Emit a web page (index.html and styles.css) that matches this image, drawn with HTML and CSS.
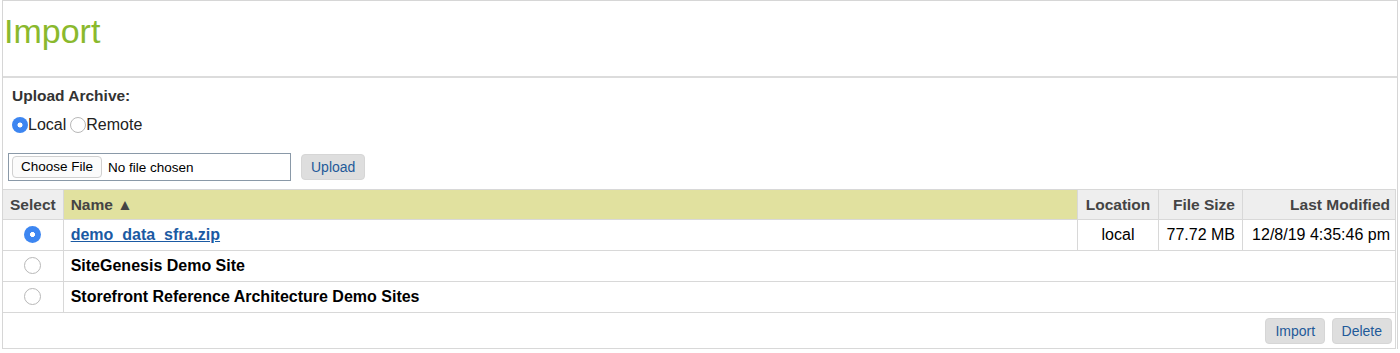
FILE: index.html
```html
<!DOCTYPE html>
<html>
  <head>
    <title>Import</title>
    <link rel="stylesheet" href="styles.css">
  </head>
  <body>
    <div class="page">
      <div class="head">
        <h1 class="title">Import</h1>
      </div>

      <div class="upload">
        <p class="upload-label">Upload Archive:</p>
        <div class="radios">
          <label class="opt"><input type="radio" name="where" class="radio" checked>Local</label>
          <label class="opt"><input type="radio" name="where" class="radio">Remote</label>
        </div>
        <div class="file-row">
          <div class="file-box">
            <span class="choose">Choose File</span>
            <span class="no-file">No file chosen</span>
          </div>
          <button class="btn">Upload</button>
        </div>
      </div>

      <table class="archives">
        <tr>
          <th class="col-select">Select</th>
          <th class="col-name sorted">Name &#9650;</th>
          <th class="col-loc">Location</th>
          <th class="col-size">File Size</th>
          <th class="col-date">Last Modified</th>
        </tr>
        <tr>
          <td class="col-select"><input type="radio" name="pick" class="radio" checked></td>
          <td class="col-name"><a href="#" class="file-link">demo_data_sfra.zip</a></td>
          <td class="col-loc">local</td>
          <td class="col-size">77.72 MB</td>
          <td class="col-date">12/8/19 4:35:46 pm</td>
        </tr>
        <tr>
          <td class="col-select"><input type="radio" name="pick" class="radio"></td>
          <td class="col-name" colspan="4">SiteGenesis Demo Site</td>
        </tr>
        <tr>
          <td class="col-select"><input type="radio" name="pick" class="radio"></td>
          <td class="col-name" colspan="4">Storefront Reference Architecture Demo Sites</td>
        </tr>
        <tr>
          <td class="actions" colspan="5">
            <button class="btn">Import</button>
            <button class="btn">Delete</button>
          </td>
        </tr>
      </table>
    </div>
  </body>
</html>
```

FILE: styles.css
```css
body{
  margin: 0;
  font-family: "Liberation Sans", Arial, Helvetica, sans-serif;
  color: #000;
  background-color: white;
}

.page{
  margin-left: 2px;
  width: 1396px;
  box-sizing: border-box;
  border: 1px solid #d6d6d6;
  border-bottom: none;
}

.head{
  height: 75px;
  border-bottom: 2px solid #dcdcdc;
}

.title{
  margin: 0;
  padding-top: 10px;
  padding-left: 1px;
  font-size: 34px;
  line-height: 40px;
  font-weight: normal;
  color: #8ab92d;
}

.upload{
  padding: 9px 0 8px 5px;
}

.upload-label{
  margin: 0 0 0 4px;
  font-size: 15.5px;
  line-height: 18px;
  font-weight: bold;
  color: #333;
}

.radios{
  display: flex;
  margin-top: 10px;
  height: 20px;
  align-items: center;
}

.opt{
  display: flex;
  align-items: center;
  font-size: 16px;
  color: #222;
}

.radio{
  appearance: none;
  -webkit-appearance: none;
  margin: 0 1px 0 5px;
  width: 16px;
  height: 16px;
  border-radius: 50%;
  border: 1px solid #b8b8b8;
  background-color: white;
  box-sizing: border-box;
}

.opt .radio{
  margin-left: 4px;
  margin-right: 0;
}

.radio:checked{
  border: none;
  background: radial-gradient(circle, white 0, white 2.2px, #3d86f1 2.8px);
}

.file-row{
  display: flex;
  align-items: center;
  gap: 10px;
  margin-top: 18px;
}

.file-box{
  display: flex;
  align-items: center;
  width: 283px;
  height: 28px;
  box-sizing: border-box;
  border: 1px solid #8a99a8;
  padding-left: 3px;
  font-size: 13.5px;
}

.choose{
  padding: 3px 8px;
  border: 1px solid #d0d0d0;
  border-radius: 4px;
  background-color: #fbfbfb;
  line-height: 14px;
}

.no-file{
  margin-left: 6px;
}

.btn{
  font-family: "Liberation Sans", Arial, Helvetica, sans-serif;
  font-size: 14px;
  color: #1f5a99;
  background-color: #dedede;
  border: 1px solid #d6d6d6;
  border-radius: 4px;
  height: 26px;
  padding: 0 9px;
  cursor: pointer;
}

.archives{
  width: 1393px;
  border-collapse: collapse;
  font-size: 16px;
}

.archives th, .archives td{
  border: 1px solid #d8d8d8;
  height: 31px;
  padding: 0 7px;
  box-sizing: border-box;
}

.archives th{
  background-color: #eeeeee;
  color: #444;
  font-size: 15.5px;
  height: 30px;
}

.archives td{
  font-weight: bold;
}

.archives tr td:first-child, .archives tr th:first-child{
  border-left: none;
}

.archives th.sorted{
  background-color: #e1e19f;
  text-align: left;
}

.col-select{
  width: 60px;
  text-align: center;
}

.col-select .radio{
  width: 17px;
  height: 17px;
  margin: 3px 0 0 0;
}

.col-name{
  text-align: left;
}

.col-loc{
  width: 81px;
  text-align: center;
}

.archives td.col-loc, .archives td.col-size, .archives td.col-date{
  font-weight: normal;
}

.col-size{
  width: 84px;
  text-align: right;
}

.archives .col-date{
  width: 153px;
  text-align: right;
  padding-right: 5px;
}

.file-link{
  color: #1b5aa3;
}

.archives td.actions{
  height: 36px;
  text-align: right;
  padding: 0 3px 0 0;
}

.actions .btn{
  margin-left: 2px;
}
```
